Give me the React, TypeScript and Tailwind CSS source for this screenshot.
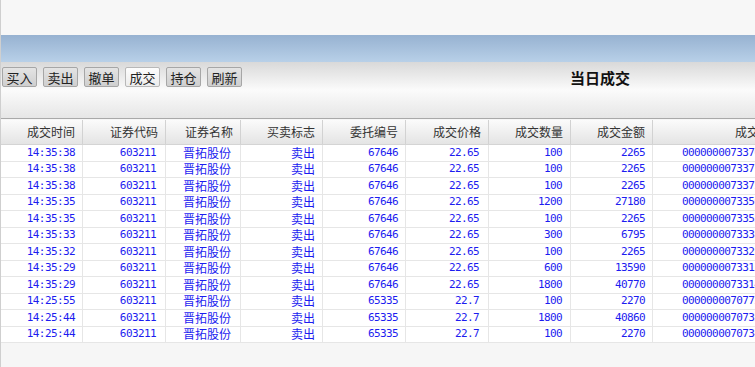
import React from "react";

const cols = [
  { label: "成交时间", w: "w-[82px]" },
  { label: "证券代码", w: "w-[83px]" },
  { label: "证券名称", w: "w-[75px]" },
  { label: "买卖标志", w: "w-[82px]" },
  { label: "委托编号", w: "w-[83px]" },
  { label: "成交价格", w: "w-[83px]" },
  { label: "成交数量", w: "w-[82px]" },
  { label: "成交金额", w: "w-[82px]" },
  { label: "成交编号", w: "w-[138px]" },
];

const rows = [
  ["14:35:38", "67646", "22.65", "100", "2265", "0000000073370"],
  ["14:35:38", "67646", "22.65", "100", "2265", "0000000073371"],
  ["14:35:38", "67646", "22.65", "100", "2265", "0000000073372"],
  ["14:35:35", "67646", "22.65", "1200", "27180", "0000000073356"],
  ["14:35:35", "67646", "22.65", "100", "2265", "0000000073355"],
  ["14:35:33", "67646", "22.65", "300", "6795", "0000000073338"],
  ["14:35:32", "67646", "22.65", "100", "2265", "0000000073321"],
  ["14:35:29", "67646", "22.65", "600", "13590", "0000000073315"],
  ["14:35:29", "67646", "22.65", "1800", "40770", "0000000073314"],
  ["14:25:55", "65335", "22.7", "100", "2270", "0000000070772"],
  ["14:25:44", "65335", "22.7", "1800", "40860", "0000000070735"],
  ["14:25:44", "65335", "22.7", "100", "2270", "0000000070734"],
];

const buttons = ["买入", "卖出", "撤单", "成交", "持仓", "刷新"];

const mono = "font-['DejaVu_Sans_Mono',monospace] text-[11px] tracking-[-0.6px]";
const cjk = "font-['Noto_Sans_CJK_SC',sans-serif] text-[12px]";
const cell = "shrink-0 flex items-center justify-end border-r-[1.5px] border-[#e6e6e6]";

export default function App() {
  return (
    <div className="w-[755px] h-[367px] overflow-hidden bg-[#f6f6f6] border-l border-[#cfcfcf] font-['Noto_Sans_CJK_SC',sans-serif]">
      {/* top blank + blue band */}
      <div className="h-[35px] bg-[#f7f7f7]" />
      <div className="h-[27px] bg-gradient-to-b from-[#97b2d1] to-[#b8d0e8]" />

      {/* toolbar */}
      <div className="h-[57px] bg-gradient-to-b from-[#d9d9d9] via-[#fbfbfb] to-[#e6e6e6] border-b border-[#a9a9a9] relative">
        <div className="flex gap-[6px] pt-[5px] pl-[1px]">
          {buttons.map((b) => (
            <div
              key={b}
              className={
                "h-[20px] w-[35px] flex items-center justify-center rounded-[2px] border text-[13px] leading-none text-[#222] " +
                (b === "成交"
                  ? "border-[#b8b8b8] bg-gradient-to-b from-[#fdfdfd] to-[#ececec]"
                  : "border-[#a6a6a6] bg-gradient-to-b from-[#e4e4e4] to-[#cfcfcf]")
              }
            >
              {b}
            </div>
          ))}
        </div>
        <div className="absolute left-[569px] top-[6px] text-[15px] font-bold text-[#111] leading-[20px]">
          当日成交
        </div>
      </div>

      {/* table */}
      <div className="w-[790px] mt-[1px]">
        <div className="flex h-[25px] bg-gradient-to-b from-[#fbfbfb] to-[#e4e4e4] border-b border-[#d4d4d4]">
          {cols.map((c) => (
            <div
              key={c.label}
              className={`${c.w} shrink-0 h-full flex items-center justify-end pr-[7px] border-r border-[#d2d2d2] text-[12px] text-[#333]`}
            >
              {c.label}
            </div>
          ))}
        </div>
        <div className="bg-white">
          {rows.map((r, i) => (
            <div key={i} className="flex h-[16.5px] border-b-[1.5px] border-[#e6e6e6] text-[#1c1cf0]">
              <div className={`w-[82px] pr-[7px] ${cell} ${mono}`}>{r[0]}</div>
              <div className={`w-[83px] pr-[9px] ${cell} ${mono}`}>603211</div>
              <div className={`w-[75px] pr-[9px] ${cell} ${cjk}`}>晋拓股份</div>
              <div className={`w-[82px] pr-[7px] ${cell} ${cjk}`}>卖出</div>
              <div className={`w-[83px] pr-[7px] ${cell} ${mono}`}>{r[1]}</div>
              <div className={`w-[83px] pr-[9px] ${cell} ${mono}`}>{r[2]}</div>
              <div className={`w-[82px] pr-[8px] ${cell} ${mono}`}>{r[3]}</div>
              <div className={`w-[82px] pr-[7px] ${cell} ${mono}`}>{r[4]}</div>
              <div className={`w-[138px] shrink-0 flex items-center pl-[29px] ${mono}`}>{r[5]}</div>
            </div>
          ))}
        </div>
      </div>
    </div>
  );
}
